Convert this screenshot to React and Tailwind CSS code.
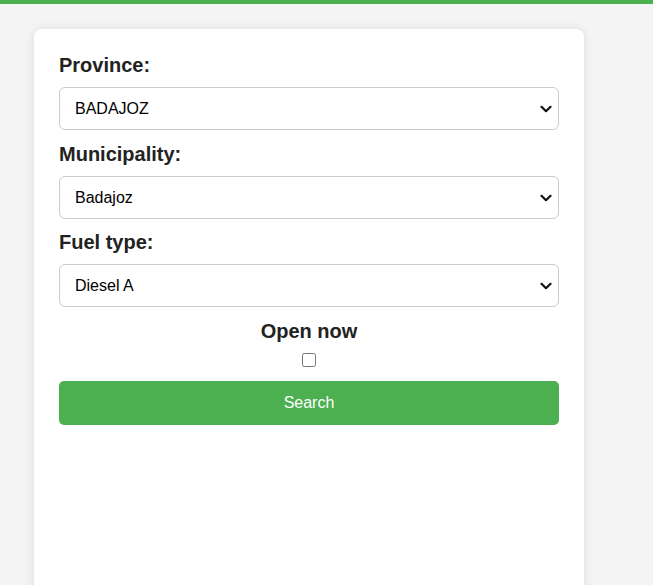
import React, { useState } from 'react';

const Chevron = () => (
  <svg
    className="pointer-events-none absolute right-[7px] top-1/2 -translate-y-1/2"
    width="12"
    height="8"
    viewBox="0 0 12 8"
    fill="none"
  >
    <path d="M1.5 1.8L6 6.2L10.5 1.8" stroke="#111" strokeWidth="2.2" strokeLinecap="round" strokeLinejoin="round" />
  </svg>
);

const Field = ({ label, value, options, onChange, className = 'mb-[13px]' }) => (
  <div className={className}>
    <label className="mb-[10px] block text-[20px] font-bold leading-[23px] text-[#222]">{label}</label>
    <div className="relative">
      <select
        value={value}
        onChange={(e) => onChange(e.target.value)}
        className="block h-[43px] w-full appearance-none rounded-[6px] border border-[#ccc] bg-white pl-[15px] pr-8 text-[16px] text-black outline-none"
      >
        {options.map((o) => (
          <option key={o} value={o}>{o}</option>
        ))}
      </select>
      <Chevron />
    </div>
  </div>
);

const App = () => {
  const [province, setProvince] = useState('BADAJOZ');
  const [municipality, setMunicipality] = useState('Badajoz');
  const [fuel, setFuel] = useState('Diesel A');
  const [openNow, setOpenNow] = useState(false);

  return (
    <div className="min-h-[585px] bg-[#f4f4f4] font-['Liberation_Sans',Arial,sans-serif]">
      <div className="h-1 bg-[#4caf50]" />
      <div className="ml-[34px] mt-[25px] min-h-[600px] w-[550px] rounded-t-[8px] bg-white p-[25px] shadow-[0_0_10px_rgba(0,0,0,0.1)]">
        <Field label="Province:" value={province} options={['BADAJOZ', 'CÁCERES', 'MADRID']} onChange={setProvince} />
        <Field label="Municipality:" value={municipality} options={['Badajoz', 'Mérida', 'Zafra']} onChange={setMunicipality} className="mb-[12px]" />
        <Field label="Fuel type:" value={fuel} options={['Diesel A', 'Gasolina 95', 'Gasolina 98']} onChange={setFuel} />

        <div className="flex flex-col items-center">
          <label htmlFor="open-now" className="text-[20px] font-bold leading-[23px] text-[#222]">Open now</label>
          <input
            id="open-now"
            type="checkbox"
            checked={openNow}
            onChange={(e) => setOpenNow(e.target.checked)}
            className="mt-[10px] h-[14px] w-[14px]"
          />
        </div>

        <button className="mt-[14px] h-[44px] w-full rounded-[5px] bg-[#4caf50] text-[16px] text-white">
          Search
        </button>
      </div>
    </div>
  );
};

export default App;
